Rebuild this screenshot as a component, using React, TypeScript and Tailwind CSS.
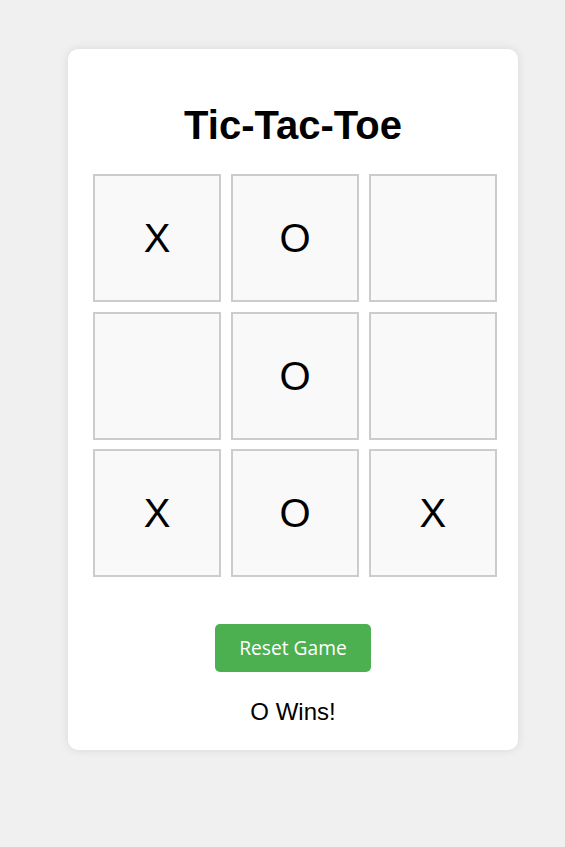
import React from "react";

const board: string[] = ["X", "O", "", "", "O", "", "X", "O", "X"];

export default function App() {
  return (
    <div
      className="min-h-[847px] w-full bg-[#f0f0f0] flex justify-center items-start pl-[21px]"
      style={{ fontFamily: '"Liberation Sans", Arial, sans-serif' }}
    >
      <div className="mt-[49px] w-[450px] bg-white rounded-[10px] shadow-[0_0_10px_rgba(0,0,0,0.1)] pt-[53px] pb-[24px] flex flex-col items-center">
        <h1 className="text-[40px] leading-[46px] font-bold text-black m-0">Tic-Tac-Toe</h1>
        <div className="mt-[26px] self-start ml-[25px] grid grid-cols-3 gap-x-[9.5px] gap-y-[9.5px] w-[404px]">
          {board.map((v, i) => (
            <div
              key={i}
              className="h-[128px] border-2 border-[#cccccc] bg-[#f9f9f9] flex items-center justify-center text-[40px] text-black"
            >
              {v}
            </div>
          ))}
        </div>
        <button
          className="mt-[47px] w-[156px] h-[48px] rounded-[5px] bg-[#4caf50] text-white text-[19.2px] flex items-center justify-center"
          style={{ fontFamily: '"Open Sans", "Noto Sans", sans-serif' }}
        >
          Reset Game
        </button>
        <div className="mt-[26px] text-[24px] leading-[28px] text-black">O Wins!</div>
      </div>
    </div>
  );
}
